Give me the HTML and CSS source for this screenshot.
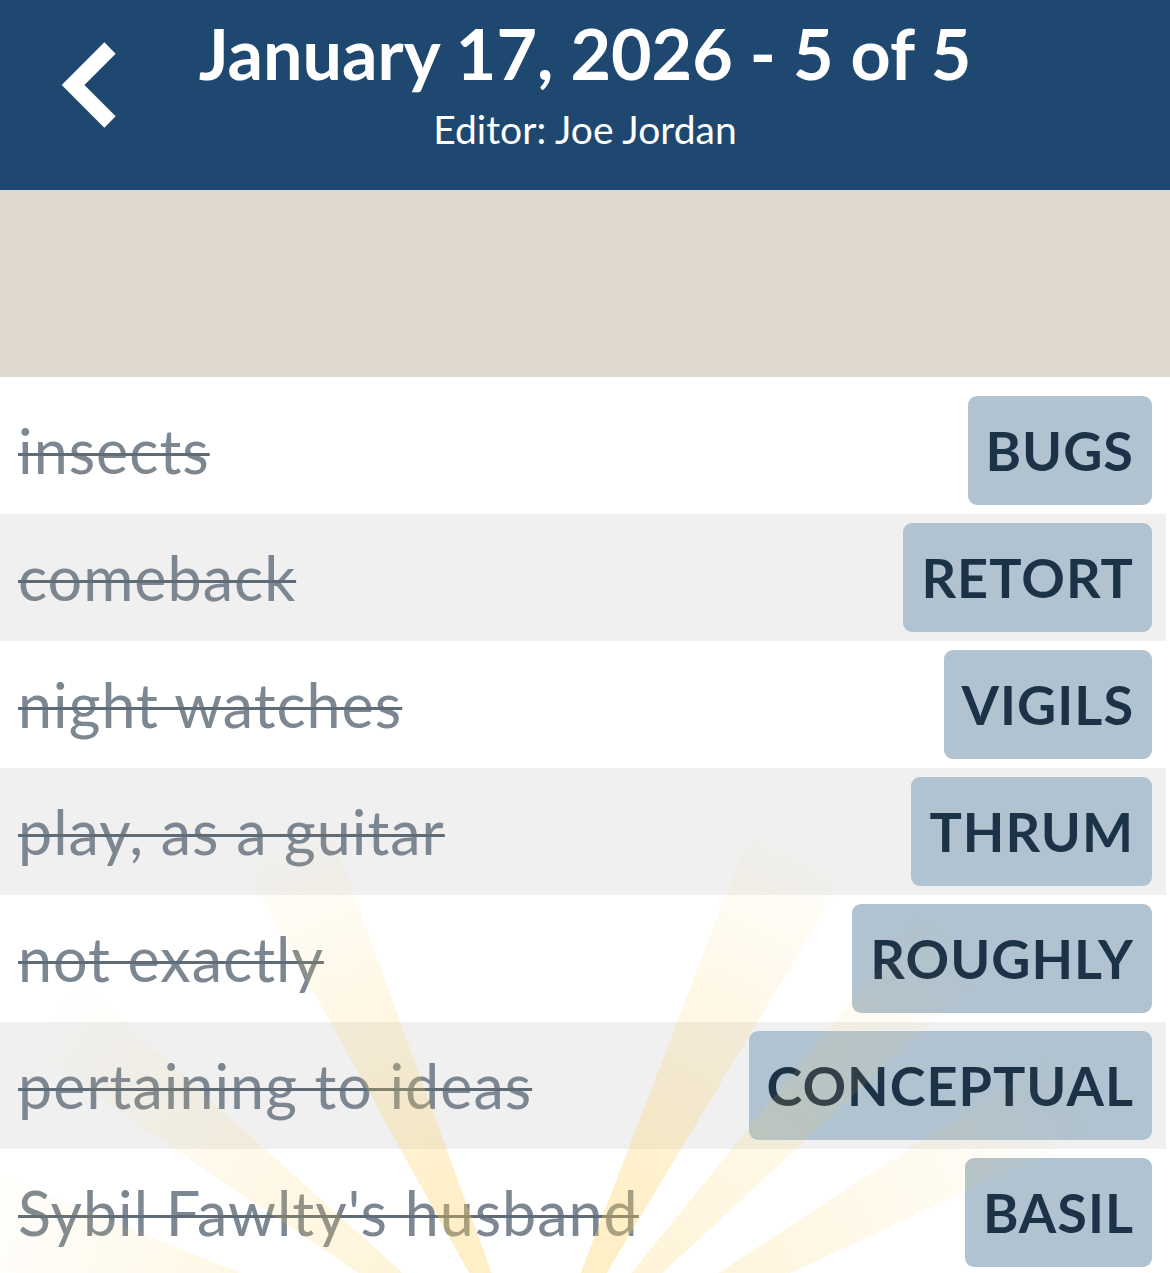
FILE: index.html
```html
<!DOCTYPE html>
<html lang="en">
<head>
  <meta charset="UTF-8" />
  <meta name="viewport" content="width=device-width, initial-scale=1.0" />
  <title>January 17, 2026 - 5 of 5</title>
  <link rel="stylesheet" href="styles.css">
</head>
<body>
  <header class="top-bar">
    <a class="back-link" href="#" aria-label="Back">
      <svg class="back-icon" width="80" height="100" viewBox="0 0 80 100" aria-hidden="true">
        <polyline points="70,13 33,50 70,87" fill="none" stroke="#fff" stroke-width="16" stroke-linejoin="miter" />
      </svg>
    </a>
    <div class="top-titles">
      <h1 class="puzzle-title">January 17, 2026 - 5 of 5</h1>
      <p class="puzzle-editor">Editor: Joe Jordan</p>
    </div>
    <span class="top-spacer"></span>
  </header>

  <div class="banner"></div>

  <section class="clue-list" aria-label="Solved clues">
    <div class="clue-row">
      <span class="clue-text">insects</span>
      <span class="answer">BUGS</span>
    </div>
    <div class="clue-row alt">
      <span class="clue-text">comeback</span>
      <span class="answer">RETORT</span>
    </div>
    <div class="clue-row">
      <span class="clue-text">night watches</span>
      <span class="answer">VIGILS</span>
    </div>
    <div class="clue-row alt">
      <span class="clue-text">play, as a guitar</span>
      <span class="answer">THRUM</span>
    </div>
    <div class="clue-row">
      <span class="clue-text">not exactly</span>
      <span class="answer">ROUGHLY</span>
    </div>
    <div class="clue-row alt">
      <span class="clue-text">pertaining to ideas</span>
      <span class="answer">CONCEPTUAL</span>
    </div>
    <div class="clue-row">
      <span class="clue-text">Sybil Fawlty's husband</span>
      <span class="answer">BASIL</span>
    </div>

    <!-- celebration rays, drawn over the finished list -->
    <div class="sunburst" aria-hidden="true"></div>
  </section>
</body>
</html>
```

FILE: styles.css
```css
:root {
  --navy: #1f4870;
  --sand: #dfd8cc;
  --row-alt: #f0f0f0;
  --chip: #b1c3d0;
  --chip-ink: #1c3247;
  --clue: #7d8792;
  --strike: #5f6b76;
  --ray: rgba(255, 208, 92, 0.34);
  --ray-soft: rgba(255, 208, 92, 0.22);
}

* { box-sizing: border-box; }

body {
  margin: 0;
  background: #fff;
  font-family: Lato, "Open Sans", Arial, sans-serif;
}

a { color: inherit; text-decoration: none; }

.top-bar {
  height: 190px;
  background: var(--navy);
  color: #fff;
  display: grid;
  grid-template-columns: 1fr auto 1fr;
  align-items: start;
}

.back-link {
  justify-self: start;
  margin: 35px 0 0 40px;
}

.back-icon { display: block; }

.top-titles {
  padding-top: 11px;
  text-align: center;
}

.puzzle-title {
  margin: 0;
  font-size: 70px;
  line-height: 1.2;
  font-weight: 700;
}

.puzzle-editor {
  margin: 11px 0 0;
  font-size: 39px;
  line-height: 1.2;
  font-weight: 400;
}

.banner {
  height: 187px;
  background: var(--sand);
}

.clue-list {
  position: relative;
  padding-top: 10px;
  overflow: hidden;
}

.clue-row {
  height: 127px;
  margin-right: 4px;
  padding: 9px 14px 9px 18px;
  display: flex;
  align-items: center;
  justify-content: space-between;
  gap: 24px;
}

.clue-row.alt { background: var(--row-alt); }

.clue-text {
  font-size: 61px;
  line-height: 1.2;
  letter-spacing: 1px;
  color: var(--clue);
  text-decoration: line-through;
  text-decoration-color: var(--strike);
  text-decoration-thickness: 3px;
  white-space: nowrap;
}

.answer {
  height: 109px;
  padding: 0 18px;
  display: flex;
  align-items: center;
  border-radius: 9px;
  background: var(--chip);
  color: var(--chip-ink);
  font-size: 54px;
  font-weight: 700;
  letter-spacing: 1px;
  white-space: nowrap;
}

.sunburst {
  position: absolute;
  inset: 0;
  pointer-events: none;
  background: conic-gradient(from 0deg at 535px 1015px,
    transparent 0deg 21deg,
    var(--ray) 21deg 31deg,
    transparent 31deg 39deg,
    var(--ray-soft) 39deg 47deg,
    transparent 47deg 57deg,
    var(--ray-soft) 57deg 65deg,
    transparent 65deg 282deg,
    var(--ray-soft) 282deg 292deg,
    transparent 292deg 304deg,
    var(--ray-soft) 304deg 312deg,
    transparent 312deg 331deg,
    var(--ray) 331deg 340deg,
    transparent 340deg 360deg);
  -webkit-mask-image: radial-gradient(circle at 535px 1015px, #000 0, #000 200px, transparent 620px);
  mask-image: radial-gradient(circle at 535px 1015px, #000 0, #000 200px, transparent 620px);
}
```
